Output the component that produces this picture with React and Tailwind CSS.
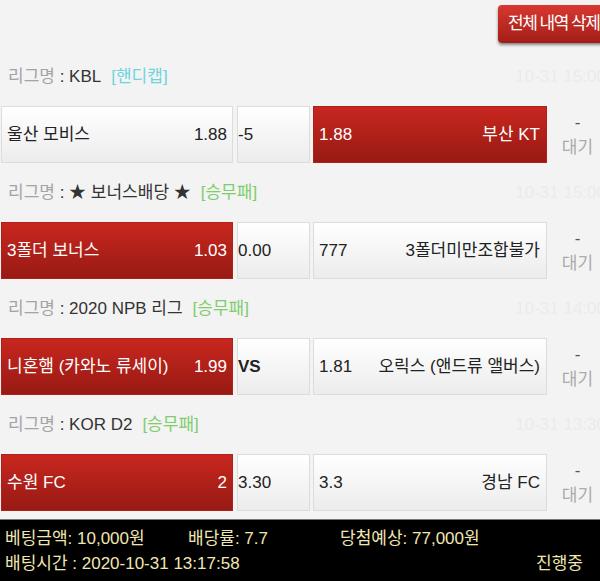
const games = [
  {
    league: 'KBL',
    tag: '[핸디캡]',
    tagColor: 'text-[#6fd3dd]',
    time: '10-31 15:00',
    home: '울산 모비스',
    homeOdds: '1.88',
    mid: '-5',
    awayOdds: '1.88',
    away: '부산 KT',
    pick: 'away',
  },
  {
    league: '★ 보너스배당 ★',
    tag: '[승무패]',
    tagColor: 'text-[#7fcc6e]',
    time: '10-31 15:00',
    home: '3폴더 보너스',
    homeOdds: '1.03',
    mid: '0.00',
    awayOdds: '777',
    away: '3폴더미만조합불가',
    pick: 'home',
  },
  {
    league: '2020 NPB 리그',
    tag: '[승무패]',
    tagColor: 'text-[#7fcc6e]',
    time: '10-31 14:00',
    home: '니혼햄 (카와노 류세이)',
    homeOdds: '1.99',
    mid: 'VS',
    awayOdds: '1.81',
    away: '오릭스 (앤드류 앨버스)',
    pick: 'home',
  },
  {
    league: 'KOR D2',
    tag: '[승무패]',
    tagColor: 'text-[#7fcc6e]',
    time: '10-31 13:30',
    home: '수원 FC',
    homeOdds: '2',
    mid: '3.30',
    awayOdds: '3.3',
    away: '경남 FC',
    pick: 'home',
  },
]

const whiteCell = 'bg-gradient-to-b from-white to-[#ececec] border border-[#dcdcdc] text-[#222]'
const redCell = 'bg-gradient-to-b from-[#c8271f] to-[#981a13] border border-[#b02019] text-white'

function GameBlock({game}) {
  return (
    <div>
      <div className="h-[59px] flex items-center pl-[8px] text-[17px]">
        <span className="text-[#a3a3a3]">리그명</span>
        <span className="text-[#333]">&nbsp;: {game.league}</span>
        <span className={`ml-[10px] ${game.tagColor}`}>{game.tag}</span>
        <span className="ml-auto -mr-[6px] text-[#ebebeb] whitespace-nowrap">{game.time}</span>
      </div>
      <div className="h-[57px] flex pl-[1px] text-[17px]">
        <div
          className={`w-[232px] flex items-center justify-between pl-[5px] pr-[5px] ${game.pick === 'home' ? redCell : whiteCell}`}
        >
          <span>{game.home}</span>
          <span>{game.homeOdds}</span>
        </div>
        <div className={`ml-[4px] w-[73px] flex items-center ${whiteCell} ${game.mid === 'VS' ? 'font-bold' : ''}`}>
          {game.mid}
        </div>
        <div
          className={`ml-[3px] w-[234px] flex items-center justify-between pl-[5px] pr-[6px] ${game.pick === 'away' ? redCell : whiteCell}`}
        >
          <span>{game.awayOdds}</span>
          <span>{game.away}</span>
        </div>
        <div className="flex-1 flex flex-col items-center justify-center pl-[8px] leading-[25px]">
          <span className="text-[#555]">-</span>
          <span className="text-[#aaa]">대기</span>
        </div>
      </div>
    </div>
  )
}

export default function App() {
  return (
    <div
      className="w-[600px] h-[581px] overflow-hidden bg-[#f3f3f3] flex flex-col"
      style={{fontFamily: '"Liberation Sans", "Noto Sans CJK KR", sans-serif'}}
    >
      <div className="h-[47px] flex justify-end pt-[5px]">
        <button
          type="button"
          className="h-[38px] w-[140px] -mr-[38px] shrink-0 rounded-[4px] bg-gradient-to-b from-[#d83830] to-[#a31d17] text-white text-[17px] tracking-[-1.5px] whitespace-nowrap text-left pl-[10px] shadow-[0_2px_3px_rgba(0,0,0,0.45)]"
        >
          전체 내역 삭제
        </button>
      </div>

      {games.map((game, i) => (
        <GameBlock key={i} game={game} />
      ))}

      <div className="mt-[8px] flex-1 bg-black border-t border-[#777] text-[#f0e6b2] text-[17px] leading-[25px] pt-[6px] px-[5px]">
        <div className="flex">
          <span className="w-[183px]">베팅금액: 10,000원</span>
          <span className="w-[152px]">배당률: 7.7</span>
          <span>당첨예상: 77,000원</span>
        </div>
        <div className="flex justify-between pr-[12px]">
          <span>배팅시간 : 2020-10-31 13:17:58</span>
          <span>진행중</span>
        </div>
      </div>
    </div>
  )
}
